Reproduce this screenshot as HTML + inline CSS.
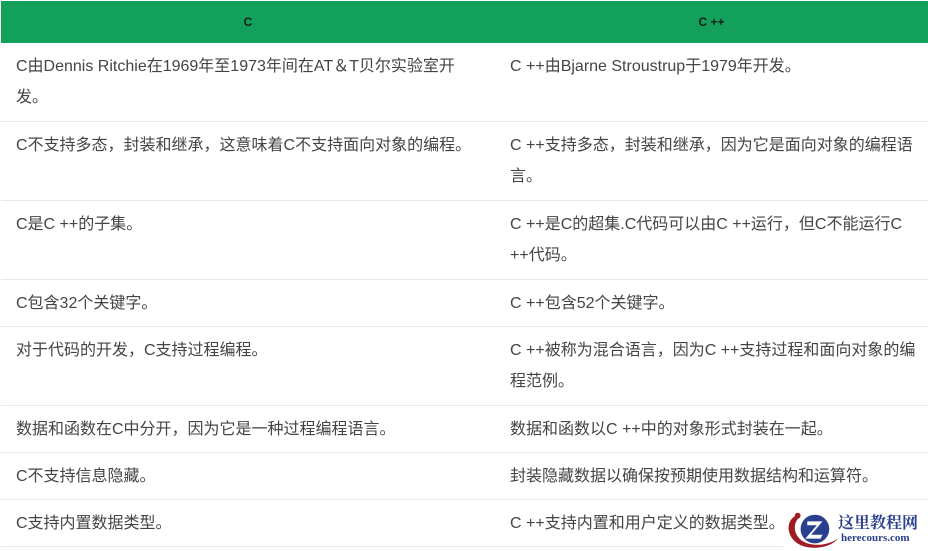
<!DOCTYPE html>
<html><head><meta charset="utf-8"><style>
body{margin:0;background:#fff;width:928px;height:551px;overflow:hidden;font-family:"Liberation Sans","Noto Sans CJK SC",sans-serif;}
table{position:absolute;left:1px;top:1px;width:927px;border-collapse:collapse;table-layout:fixed;}
th{background:#13a05a;color:#1a1a1a;font-size:12px;font-weight:bold;height:42px;padding:0;text-align:center;}
td{font-size:16px;color:#444;line-height:31px;padding:8px 15px 7px;vertical-align:top;border-bottom:1px solid #e8e8e8;white-space:nowrap;overflow:visible;}
tr.t td{padding-bottom:8px;}
.logo{position:absolute;left:783px;top:508px;width:145px;height:43px;background:#fff;}
</style></head><body>
<table>
<colgroup><col style="width:494px"><col></colgroup>
<tr><th>C</th><th>C ++</th></tr>
<tr class="t"><td>C由Dennis Ritchie在1969年至1973年间在AT＆T贝尔实验室开<br>发。</td><td>C ++由Bjarne Stroustrup于1979年开发。</td></tr>
<tr class="t"><td>C不支持多态，封装和继承，这意味着C不支持面向对象的编程。</td><td>C ++支持多态，封装和继承，因为它是面向对象的编程语<br>言。</td></tr>
<tr class="t"><td>C是C ++的子集。</td><td>C ++是C的超集.C代码可以由C ++运行，但C不能运行C<br>++代码。</td></tr>
<tr><td>C包含32个关键字。</td><td>C ++包含52个关键字。</td></tr>
<tr class="t"><td>对于代码的开发，C支持过程编程。</td><td>C ++被称为混合语言，因为C ++支持过程和面向对象的编<br>程范例。</td></tr>
<tr><td>数据和函数在C中分开，因为它是一种过程编程语言。</td><td>数据和函数以C ++中的对象形式封装在一起。</td></tr>
<tr><td>C不支持信息隐藏。</td><td>封装隐藏数据以确保按预期使用数据结构和运算符。</td></tr>
<tr><td>C支持内置数据类型。</td><td>C ++支持内置和用户定义的数据类型。</td></tr>
</table>
<div class="logo">
<svg width="60" height="43" viewBox="0 0 60 45" style="position:absolute;left:0;top:0">
<path d="M12 8 C0 14 2 34 20 40 C34 44 50 40 56 32 C48 38 30 42 18 34 C8 26 10 14 16 10 Z" fill="#a01c24"/>
<circle cx="14" cy="8" r="3" fill="#a01c24"/>
<circle cx="32" cy="22" r="15" fill="#2a3f8f"/>
<path d="M24 14 H40 L28 28 H40 L38 32 H22 L34 18 H24 Z" fill="#fff"/>
</svg>
<div style="position:absolute;left:55px;top:2px;font-family:'Noto Serif CJK SC',serif;font-weight:bold;font-size:16px;color:#2a3f8f;white-space:nowrap">这里教程网</div>
<div style="position:absolute;left:58px;top:24px;font-family:'Liberation Serif',serif;font-weight:bold;font-size:11px;color:#2a3f8f;white-space:nowrap">herecours.com</div>
</div>
</body></html>
